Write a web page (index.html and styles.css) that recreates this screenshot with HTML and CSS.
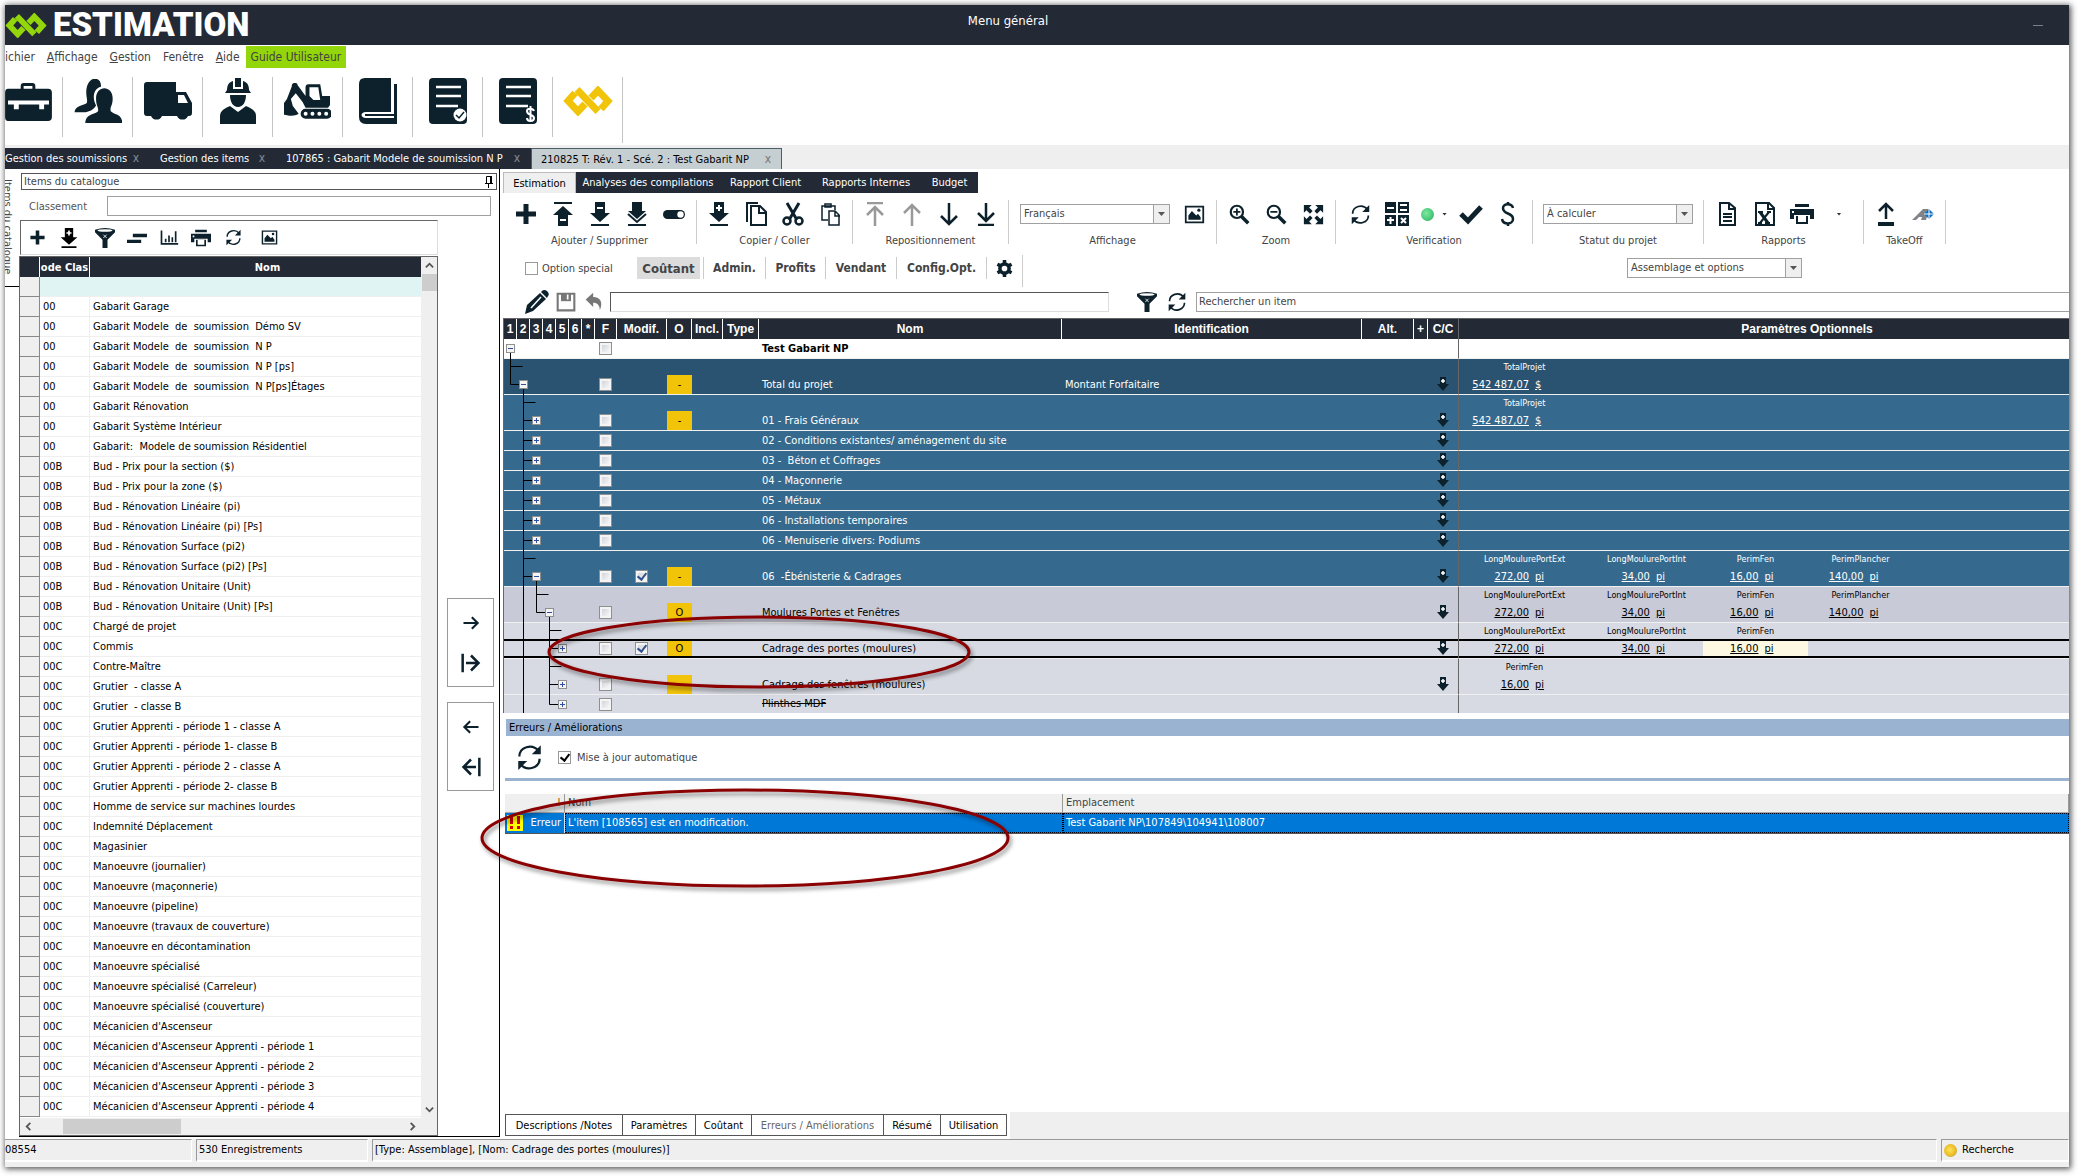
FILE: index.html
```html
<!DOCTYPE html>
<html lang="fr">
<head>
<meta charset="utf-8">
<title>Estimation - Menu général</title>
<link rel="stylesheet" href="styles.css">
</head>
<body>
<svg class="defs" aria-hidden="true">
  <symbol id="logo" viewBox="0 0 50 30"><path fill="none" stroke="currentColor" stroke-width="7" d="M12 7L5 15l10 10.500L22 18M14 3.500L35 25.500M38 23l7-8L35 4.500 28 12"/></symbol>
  <symbol id="case" viewBox="0 0 48 40"><path fill="currentColor" d="M3 7h13V4q0-3 3-3h9q3 0 3 3v3h13q4 0 4 4v25q0 4-4 4H3q-3 0-3-4V11q0-4 3-4zm16 0h9V4h-9z"/><path fill="#fff" d="M3 19h42v4h-5v5h-5v-5H14v5H9v-5H3z"/></symbol>
  <symbol id="people" viewBox="0 0 48 46"><path fill="currentColor" d="M12 14C12-4 28-4 27 8c-8 2-9 12-5 19-3 5-7 6-11 7H0c1-6 5-6 12-9 2-2 0-6 0-11z"/><path fill="currentColor" d="M22 20c0-14 17-14 17 0 0 8-3 8-2 13 4 4 11 2 12 12H11c1-10 9-8 13-12 1-4-2-5-2-13z"/></symbol>
  <symbol id="truck" viewBox="0 0 48 40"><path fill="currentColor" d="M3 1h29v10h10l6 11v10q0 3-3 3h-1a6 6 0 0 1-11 0H18a6 6 0 0 1-11 0H3q-3 0-3-3V4q0-3 3-3z"/><path fill="#fff" d="M34 14h6l4 8H34z"/></symbol>
  <symbol id="worker" viewBox="0 0 36 46"><path fill="currentColor" d="M15 0h6v9h-6zM7 12c0-5 2-8 6-9v8h10V3c4 1 6 4 6 9l2 3H5zM10 17h16c0 7-3 12-8 12s-8-5-8-12zM0 46v-8c0-6 6-8 10-10l8 6 8-6c4 2 10 4 10 10v8z"/></symbol>
  <symbol id="digger" viewBox="0 0 48 36"><path fill="currentColor" fill-rule="evenodd" d="M8 3a3 3 0 0 1 6-1l8 11V4q0-3 3-3h12l2 12h8v9l-2 3H22l-3-6-7-9-5 6 2 7 6 8c-5 3-9 2-15 1V20l3-4zM26 4v9l4 4h7L35 4zM22 26h22a5 5 0 0 1 0 10H22a5 5 0 0 1 0-10zm0 3a2 2 0 1 0 .1 4 2 2 0 0 0 0-4zm7 0a2 2 0 1 0 .1 4 2 2 0 0 0 0-4zm7 0a2 2 0 1 0 .1 4 2 2 0 0 0 0-4zm7 0a2 2 0 1 0 .1 4 2 2 0 0 0 0-4z"/></symbol>
  <symbol id="book" viewBox="0 0 38 46"><path fill="currentColor" d="M6 0h26v34H7c-6 0-6 6 0 6h28V6h3v40H7q-7 0-7-7V6q0-6 6-6zM6 36h29v2H6z"/></symbol>
  <symbol id="doc" viewBox="0 0 38 46"><rect width="38" height="46" rx="4" fill="currentColor"/><path stroke="#fff" stroke-width="2.500" d="M7 9h25M7 18h25M7 28h22"/></symbol>
  <symbol id="plus" viewBox="0 0 24 24"><path stroke="currentColor" stroke-width="5" d="M2 12h20M12 2v20"/></symbol>
  <symbol id="down" viewBox="0 0 24 24"><path fill="currentColor" d="M7 0h10v11h5L12 20 2 11h5zM3 22h18v2H3z"/><path stroke="#fff" stroke-width="2" d="M9 6h6"/></symbol>
  <symbol id="downplus" viewBox="0 0 24 24"><path fill="currentColor" d="M7 0h10v11h5L12 20 2 11h5zM3 22h18v2H3z"/><path stroke="#fff" stroke-width="2" d="M9 6h6M12 3v6"/></symbol>
  <symbol id="arrowplus" viewBox="0 0 12 14"><path fill="#0c212b" d="M3 0h6v7h3l-6 7-6-7h3z"/><path stroke="#fff" stroke-width="1.500" d="M4 4h4M6 2v4"/></symbol>
  <symbol id="downdouble" viewBox="0 0 24 24"><path fill="currentColor" d="M7 0h10v9h4L12 17 3 9h4zM3 22h18v2H3z"/><path fill="none" stroke="currentColor" stroke-width="2" d="M3 12l9 8 9-8"/></symbol>
  <symbol id="up" viewBox="0 0 24 24"><path fill="currentColor" d="M3 0h18v2H3zM12 4l10 9h-5v11H7V13H2z"/><path stroke="#fff" stroke-width="2" d="M9 18h6"/></symbol>
  <symbol id="toggle" viewBox="0 0 24 24"><rect x="1" y="8" width="22" height="9" rx="4.500" fill="currentColor"/><circle cx="18.500" cy="12.500" r="3.200" fill="#fff"/></symbol>
  <symbol id="copy" viewBox="0 0 24 24"><path fill="none" stroke="currentColor" stroke-width="2" d="M7 4h9l6 6v13H7zM15 4v7h7M3 20V1h11"/></symbol>
  <symbol id="cut" viewBox="0 0 24 24"><path fill="none" stroke="currentColor" stroke-width="3" d="M6 1l10 17M18 1L8 18"/><g fill="none" stroke="currentColor" stroke-width="2.500"><circle cx="6" cy="19" r="3.500"/><circle cx="18" cy="19" r="3.500"/></g></symbol>
  <symbol id="paste" viewBox="0 0 24 24"><path fill="none" stroke="currentColor" stroke-width="1.500" d="M10 18H4V4h13v4M7 5V2h6v3zM11 9h6l4 4v10H11zM17 9v5h5"/></symbol>
  <symbol id="totop" viewBox="0 0 24 24"><path fill="none" stroke="currentColor" stroke-width="2.500" d="M4 1h16M12 24V5M4 13l8-8 8 8"/></symbol>
  <symbol id="goup" viewBox="0 0 24 24"><path fill="none" stroke="currentColor" stroke-width="2.500" d="M12 24V3M4 11l8-8 8 8"/></symbol>
  <symbol id="godown" viewBox="0 0 24 24"><path fill="none" stroke="currentColor" stroke-width="2.500" d="M12 1v21M4 14l8 8 8-8"/></symbol>
  <symbol id="tobottom" viewBox="0 0 24 24"><path fill="none" stroke="currentColor" stroke-width="2.500" d="M4 23h16M12 1v18M4 11l8 8 8-8"/></symbol>
  <symbol id="image" viewBox="0 0 24 24"><path fill="none" stroke="currentColor" stroke-width="2" d="M2 3h20v18H2z"/><path fill="currentColor" d="M5 18v-5l4-5 5 5 2-2 3 4v3z"/><circle cx="17" cy="7" r="1.800" fill="currentColor"/></symbol>
  <symbol id="zoomin" viewBox="0 0 24 24"><g fill="none" stroke="currentColor"><circle cx="9" cy="9" r="7" stroke-width="2.500"/><path stroke-width="4" d="M14 14l8 8"/><path stroke-width="2" d="M5 9h8M9 5v8"/></g></symbol>
  <symbol id="zoomout" viewBox="0 0 24 24"><g fill="none" stroke="currentColor"><circle cx="9" cy="9" r="7" stroke-width="2.500"/><path stroke-width="4" d="M14 14l8 8"/><path stroke-width="2" d="M5 9h8"/></g></symbol>
  <symbol id="expand" viewBox="0 0 24 24"><path fill="currentColor" d="M1 1h9L7 4l4 4-3 3-4-4-3 3zM23 1v9l-3-3-4 4-3-3 4-4-3-3zM1 23v-9l3 3 4-4 3 3-4 4 3 3zM23 23h-9l3-3-4-4 3-3 4 4 3-3z"/></symbol>
  <symbol id="refresh" viewBox="0 0 24 24"><path fill="none" stroke="currentColor" stroke-width="2" d="M3 11C3 3 14-1 20 6M21 13c0 8-11 12-17 5"/><path fill="currentColor" d="M22 1v8h-8zM2 23v-8h8z"/></symbol>
  <symbol id="calc" viewBox="0 0 24 24"><path fill="currentColor" d="M0 0h11v11H0zM13 0h11v11H13zM0 13h11v11H0zM13 13h11v11H13z"/><path stroke="#fff" stroke-width="2" d="M2 6h7M15 3h7M15 8h7M2 18h7M5.500 15v7M16 16l5 5M21 16l-5 5"/></symbol>
  <symbol id="check" viewBox="0 0 24 24"><path fill="none" stroke="currentColor" stroke-width="5" d="M2 12l7 7L22 5"/></symbol>
  <symbol id="dollar" viewBox="0 0 24 24"><path fill="none" stroke="currentColor" stroke-width="2.500" d="M17 6c-1-5-10-5-10 0 0 7 10 4 10 11 0 6-10 6-11 0M12 0v3M12 21v3"/></symbol>
  <symbol id="page" viewBox="0 0 24 24"><path fill="none" stroke="currentColor" stroke-width="2" d="M4 1h9l6 5v17H4zM13 1v6h6M7 12h9M7 15h9M7 19h9"/></symbol>
  <symbol id="excel" viewBox="0 0 24 24"><path fill="none" stroke="currentColor" stroke-width="2" d="M3 1h13l5 5v17H3zM15 1v6h6"/><path stroke="currentColor" stroke-width="3" d="M7 10l8 11"/><path stroke="currentColor" stroke-width="2" d="M16 10L7 21M5 10h5M14 10h4M5 21h4M12 21h5"/></symbol>
  <symbol id="print" viewBox="0 0 24 24"><path fill="currentColor" d="M5 2h14v3H5zM0 7h24v10h-4v-4H4v4H0zM6 14h12v8H6z"/><path fill="#fff" d="M8 14h8v6H8zM2 9h2v2H2z"/></symbol>
  <symbol id="upload" viewBox="0 0 24 24"><path fill="none" stroke="currentColor" stroke-width="2.500" d="M12 17V2M5 9l7-7 7 7"/><path stroke="currentColor" stroke-width="4" d="M4 22h16"/></symbol>
  <symbol id="takeoff" viewBox="0 0 24 24"><path fill="#808489" d="M1 18L12 7h6l-3 11h-5l1-3H8l-3 3z"/><path fill="#0a6fc2" d="M18 7l5 5-5 5-5-5z"/><path stroke="#fff" d="M13 12h11M18 6v11"/></symbol>
  <symbol id="funnel" viewBox="0 0 24 24"><path fill="currentColor" d="M0 2q12-4 24 0v3l-9 9v10H9V14L0 5z"/><ellipse cx="12" cy="3" rx="9" ry="1.500" fill="#fff"/><path stroke="#fff" d="M10 8l4 4M14 8l-4 4"/></symbol>
  <symbol id="lines" viewBox="0 0 24 24"><path stroke="currentColor" stroke-width="4" d="M7 9h17M0 16h17"/></symbol>
  <symbol id="chart" viewBox="0 0 24 24"><path fill="none" stroke="currentColor" stroke-width="2" d="M3 3v16h20M8 17v-4M12 17V9M16 17v-6M20 17V4"/></symbol>
  <symbol id="pencil" viewBox="0 0 24 24"><path fill="currentColor" d="M0 24l2-9L15 3l6 6L8 21zM17 1q2-2 5 0 3 3 1 5l-1 2-6-6z"/><path stroke="#fff" stroke-width="1.500" d="M6 18L16 7"/></symbol>
  <symbol id="save" viewBox="0 0 24 24"><path fill="none" stroke="currentColor" stroke-width="2.500" d="M2 2h20v20H2z"/><path fill="currentColor" d="M6 2h12v9H6z"/><path fill="#fff" d="M13 3h2v6h-2z"/></symbol>
  <symbol id="undo" viewBox="0 0 24 24"><path fill="currentColor" d="M2 9l9-8v5c9 0 12 7 8 16 0-6-3-9-8-9v5z"/></symbol>
  <symbol id="gear" viewBox="0 0 24 24"><circle cx="12" cy="12" r="6.500" fill="none" stroke="currentColor" stroke-width="5"/><path stroke="currentColor" stroke-width="5" d="M12 0v5M12 19v5M2 6l4 2M18 16l4 2M2 18l4-2M18 8l4-2"/></symbol>
  <symbol id="right" viewBox="0 0 24 24"><path fill="none" stroke="currentColor" stroke-width="2.500" d="M3 12h17M13 5l7 7-7 7"/></symbol>
  <symbol id="rightbar" viewBox="0 0 24 24"><path fill="none" stroke="currentColor" stroke-width="3" d="M2 1v22M6 12h15M12 3l9 9-9 9"/></symbol>
  <symbol id="pin" viewBox="0 0 10 12"><path fill="none" stroke="#000" d="M2.500 7V.5h4V7M1 7.500h8M4.500 8v4"/><path fill="#000" d="M6 0h2v8H6z"/></symbol>
  <symbol id="chev" viewBox="0 0 10 10"><path fill="none" stroke="#555" stroke-width="2" d="M1 7l4-4 4 4"/></symbol>
  <symbol id="minusbox" viewBox="0 0 9 9"><rect x=".5" y=".5" width="8" height="8" fill="#f4f4f4" stroke="#8f8f8f"/><path stroke="#2f4f9e" d="M2 4.500h5"/></symbol>
  <symbol id="plusbox" viewBox="0 0 9 9"><rect x=".5" y=".5" width="8" height="8" fill="#f4f4f4" stroke="#8f8f8f"/><path stroke="#2f4f9e" d="M2 4.500h5M4.500 2v5"/></symbol>
  <symbol id="t-l3" viewBox="0 0 91 20"><path fill="none" stroke="#000" d="M19.500 0v20M19.500 9.500h10"/><use href="#plusbox" x="28" y="5" width="9" height="9"/></symbol>
  <symbol id="t-l5" viewBox="0 0 91 36"><path fill="none" stroke="#000" d="M19.500 0v36M45.500 0v36M45.500 7.500h12M45.500 25.500h10"/><use href="#plusbox" x="54" y="21" width="9" height="9"/></symbol>
</svg>

<div class="window">
  <header class="titlebar">
    <svg class="brand-mark"><use href="#logo"/></svg>
    <span class="brand">ESTIMATION</span>
    <h1 class="title">Menu général</h1>
    <button class="minimize" aria-label="Réduire"></button>
  </header>
  <nav class="menu">
    <a href="#">ichier</a><a href="#"><u>A</u>ffichage</a><a href="#"><u>G</u>estion</a><a href="#">Fenêtre</a><a href="#"><u>A</u>ide</a><a href="#" class="guide">Guide Utilisateur</a>
  </nav>
  <div class="mainbar">
    <button class="first" aria-label="Soumissions"><svg width="47" height="39"><use href="#case"/></svg></button>
    <button aria-label="Clients"><svg width="48" height="45"><use href="#people"/></svg></button>
    <button aria-label="Fournisseurs"><svg width="48" height="40"><use href="#truck"/></svg></button>
    <button aria-label="Main-d'oeuvre"><svg width="36" height="46"><use href="#worker"/></svg></button>
    <button aria-label="Équipement"><svg width="47" height="36"><use href="#digger"/></svg></button>
    <button aria-label="Catalogue"><svg width="38" height="46"><use href="#book"/></svg></button>
    <button aria-label="Formulaires"><svg width="38" height="46" viewBox="0 0 38 46"><use href="#doc"/><circle cx="31" cy="37" r="6.500" fill="#fff"/><path d="M27 37l3 3 5-6" fill="none" stroke="#0c212b" stroke-width="1.500"/></svg></button>
    <button aria-label="Coûts"><svg width="38" height="46" viewBox="0 0 38 46"><use href="#doc"/><path d="M35 33c-1-3-7-3-7 0 0 5 7 3 7 7 0 4-7 4-7 0M31.500 28v16" fill="none" stroke="#fff" stroke-width="2"/></svg></button>
    <button class="gold" aria-label="Accueil"><svg width="50" height="30"><use href="#logo"/></svg></button>
  </div>
  <div class="doctabs">
    <div class="doctab"><span>Gestion des soumissions</span><button aria-label="Fermer">x</button></div>
    <div class="doctab"><span>Gestion des items</span><button aria-label="Fermer">x</button></div>
    <div class="doctab"><span>107865 : Gabarit Modele de soumission N P</span><button aria-label="Fermer">x</button></div>
    <div class="doctab current"><span>210825 T: Rév. 1 - Scé. 2 : Test Gabarit NP</span><button aria-label="Fermer">x</button></div>
  </div>

  <main class="workspace">
    <div class="sidetab"><span>Items du catalogue</span></div>
    <section class="catalogue">
      <h2 class="panel-title">Items du catalogue <svg width="10" height="12"><use href="#pin"/></svg></h2>
      <div class="classement"><label for="classement">Classement</label><input id="classement" type="text"></div>
      <div class="cat-columns">
        <div class="cat-main">
          <div class="cat-tools">
            <button aria-label="Ajouter"><svg><use href="#plus"/></svg></button>
            <button aria-label="Insérer"><svg><use href="#downplus"/></svg></button>
            <button aria-label="Filtrer"><svg><use href="#funnel"/></svg></button>
            <button aria-label="Regrouper"><svg><use href="#lines"/></svg></button>
            <button aria-label="Statistiques"><svg><use href="#chart"/></svg></button>
            <button aria-label="Imprimer"><svg><use href="#print"/></svg></button>
            <button aria-label="Actualiser"><svg><use href="#refresh"/></svg></button>
            <button aria-label="Image"><svg><use href="#image"/></svg></button>
          </div>
          <div class="cat-grid">
            <div class="cat-scroll">
              <table class="cat-table">
                <colgroup><col class="c-gutter"><col class="c-code"><col></colgroup>
                <thead><tr><th></th><th>ode Clas</th><th>Nom</th></tr></thead>
                <tbody>
                  <tr class="filter"><th></th><td></td><td></td></tr>
                  <tr><th></th><td>00</td><td>Gabarit Garage</td></tr>
                  <tr><th></th><td>00</td><td>Gabarit Modele&nbsp; de&nbsp; soumission&nbsp; Démo SV</td></tr>
                  <tr><th></th><td>00</td><td>Gabarit Modele&nbsp; de&nbsp; soumission&nbsp; N P</td></tr>
                  <tr><th></th><td>00</td><td>Gabarit Modele&nbsp; de&nbsp; soumission&nbsp; N P [ps]</td></tr>
                  <tr><th></th><td>00</td><td>Gabarit Modele&nbsp; de&nbsp; soumission&nbsp; N P[ps]Étages</td></tr>
                  <tr><th></th><td>00</td><td>Gabarit Rénovation</td></tr>
                  <tr><th></th><td>00</td><td>Gabarit Système Intérieur</td></tr>
                  <tr><th></th><td>00</td><td>Gabarit:&nbsp; Modele de soumission Résidentiel</td></tr>
                  <tr><th></th><td>00B</td><td>Bud - Prix pour la section ($)</td></tr>
                  <tr><th></th><td>00B</td><td>Bud - Prix pour la zone ($)</td></tr>
                  <tr><th></th><td>00B</td><td>Bud - Rénovation Linéaire (pi)</td></tr>
                  <tr><th></th><td>00B</td><td>Bud - Rénovation Linéaire (pi) [Ps]</td></tr>
                  <tr><th></th><td>00B</td><td>Bud - Rénovation Surface (pi2)</td></tr>
                  <tr><th></th><td>00B</td><td>Bud - Rénovation Surface (pi2) [Ps]</td></tr>
                  <tr><th></th><td>00B</td><td>Bud - Rénovation Unitaire (Unit)</td></tr>
                  <tr><th></th><td>00B</td><td>Bud - Rénovation Unitaire (Unit) [Ps]</td></tr>
                  <tr><th></th><td>00C</td><td>Chargé de projet</td></tr>
                  <tr><th></th><td>00C</td><td>Commis</td></tr>
                  <tr><th></th><td>00C</td><td>Contre-Maître</td></tr>
                  <tr><th></th><td>00C</td><td>Grutier&nbsp; - classe A</td></tr>
                  <tr><th></th><td>00C</td><td>Grutier&nbsp; - classe B</td></tr>
                  <tr><th></th><td>00C</td><td>Grutier Apprenti - période 1 - classe A</td></tr>
                  <tr><th></th><td>00C</td><td>Grutier Apprenti - période 1- classe B</td></tr>
                  <tr><th></th><td>00C</td><td>Grutier Apprenti - période 2 - classe A</td></tr>
                  <tr><th></th><td>00C</td><td>Grutier Apprenti - période 2- classe B</td></tr>
                  <tr><th></th><td>00C</td><td>Homme de service sur machines lourdes</td></tr>
                  <tr><th></th><td>00C</td><td>Indemnité Déplacement</td></tr>
                  <tr><th></th><td>00C</td><td>Magasinier</td></tr>
                  <tr><th></th><td>00C</td><td>Manoeuvre (journalier)</td></tr>
                  <tr><th></th><td>00C</td><td>Manoeuvre (maçonnerie)</td></tr>
                  <tr><th></th><td>00C</td><td>Manoeuvre (pipeline)</td></tr>
                  <tr><th></th><td>00C</td><td>Manoeuvre (travaux de couverture)</td></tr>
                  <tr><th></th><td>00C</td><td>Manoeuvre en décontamination</td></tr>
                  <tr><th></th><td>00C</td><td>Manoeuvre spécialisé</td></tr>
                  <tr><th></th><td>00C</td><td>Manoeuvre spécialisé (Carreleur)</td></tr>
                  <tr><th></th><td>00C</td><td>Manoeuvre spécialisé (couverture)</td></tr>
                  <tr><th></th><td>00C</td><td>Mécanicien d'Ascenseur</td></tr>
                  <tr><th></th><td>00C</td><td>Mécanicien d'Ascenseur Apprenti - période 1</td></tr>
                  <tr><th></th><td>00C</td><td>Mécanicien d'Ascenseur Apprenti - période 2</td></tr>
                  <tr><th></th><td>00C</td><td>Mécanicien d'Ascenseur Apprenti - période 3</td></tr>
                  <tr><th></th><td>00C</td><td>Mécanicien d'Ascenseur Apprenti - période 4</td></tr>
                </tbody>
              </table>
              <div class="vbar"><svg><use href="#chev"/></svg><i></i><svg class="flip"><use href="#chev"/></svg></div>
            </div>
            <div class="hbar"><svg class="ccw"><use href="#chev"/></svg><i></i><svg class="cw"><use href="#chev"/></svg></div>
          </div>
        </div>
        <div class="transfer">
          <div class="transfer-box">
            <button aria-label="Ajouter l'item"><svg><use href="#right"/></svg></button>
            <button aria-label="Ajouter à la fin"><svg><use href="#rightbar"/></svg></button>
          </div>
          <div class="transfer-box">
            <button aria-label="Retirer l'item"><svg class="mirror"><use href="#right"/></svg></button>
            <button aria-label="Tout retirer"><svg class="mirror"><use href="#rightbar"/></svg></button>
          </div>
        </div>
      </div>
    </section>

    <section class="project">
      <nav class="tabs"><button class="on">Estimation</button><button>Analyses des compilations</button><button>Rapport Client</button><button>Rapports Internes</button><button>Budget</button></nav>
      <div class="ribbon">
        <div class="group"><div class="tools">
          <button aria-label="Ajouter"><svg><use href="#plus"/></svg></button><button aria-label="Ajouter avant"><svg><use href="#up"/></svg></button><button aria-label="Supprimer"><svg><use href="#down"/></svg></button><button aria-label="Supprimer tout"><svg><use href="#downdouble"/></svg></button><button aria-label="Activer"><svg><use href="#toggle"/></svg></button>
        </div><span>Ajouter / Supprimer</span></div>
        <div class="group"><div class="tools">
          <button aria-label="Dupliquer"><svg><use href="#downplus"/></svg></button><button aria-label="Copier"><svg><use href="#copy"/></svg></button><button aria-label="Couper"><svg><use href="#cut"/></svg></button><button aria-label="Coller"><svg><use href="#paste"/></svg></button>
        </div><span>Copier / Coller</span></div>
        <div class="group"><div class="tools">
          <button class="off" aria-label="Tout en haut"><svg><use href="#totop"/></svg></button><button class="off" aria-label="Monter"><svg><use href="#goup"/></svg></button><button aria-label="Descendre"><svg><use href="#godown"/></svg></button><button aria-label="Tout en bas"><svg><use href="#tobottom"/></svg></button>
        </div><span>Repositionnement</span></div>
        <div class="group"><div class="tools">
          <div class="combo"><select aria-label="Langue"><option>Français</option></select></div><button aria-label="Images"><svg><use href="#image"/></svg></button>
        </div><span>Affichage</span></div>
        <div class="group"><div class="tools">
          <button aria-label="Agrandir"><svg><use href="#zoomin"/></svg></button><button aria-label="Réduire"><svg><use href="#zoomout"/></svg></button><button aria-label="Ajuster"><svg><use href="#expand"/></svg></button>
        </div><span>Zoom</span></div>
        <div class="group"><div class="tools">
          <button aria-label="Actualiser"><svg><use href="#refresh"/></svg></button><button aria-label="Calculer"><svg><use href="#calc"/></svg></button><button class="state" aria-label="État"><i class="led green"></i><i class="caret"></i></button><button aria-label="Vérifier"><svg><use href="#check"/></svg></button><button aria-label="Prix"><svg><use href="#dollar"/></svg></button>
        </div><span>Verification</span></div>
        <div class="group"><div class="tools">
          <div class="combo"><select aria-label="Statut"><option>À calculer</option></select></div>
        </div><span>Statut du projet</span></div>
        <div class="group"><div class="tools">
          <button aria-label="Rapport"><svg><use href="#page"/></svg></button><button aria-label="Excel"><svg><use href="#excel"/></svg></button><button aria-label="Imprimer"><svg><use href="#print"/></svg></button><button aria-label="Options"><i class="caret"></i></button>
        </div><span>Rapports</span></div>
        <div class="group"><div class="tools">
          <button aria-label="Exporter"><svg><use href="#upload"/></svg></button><button aria-label="TakeOff"><svg><use href="#takeoff"/></svg></button>
        </div><span>TakeOff</span></div>
      </div>

      <div class="modes">
        <label class="opt"><input type="checkbox" class="flat"> Option special</label>
        <div class="mode-list">
          <button class="on">Coûtant</button><button>Admin.</button><button>Profits</button><button>Vendant</button><button>Config.Opt.</button><button class="cog" aria-label="Réglages"><svg><use href="#gear"/></svg></button>
        </div>
        <div class="combo wide"><select aria-label="Contenu"><option>Assemblage et options</option></select></div>
      </div>

      <div class="editbar">
        <button aria-label="Modifier"><svg class="big"><use href="#pencil"/></svg></button>
        <button class="grey" aria-label="Enregistrer"><svg><use href="#save"/></svg></button>
        <button class="grey" aria-label="Annuler"><svg><use href="#undo"/></svg></button>
        <input type="text" class="formula" aria-label="Formule">
        <button class="push" aria-label="Filtrer"><svg><use href="#funnel"/></svg></button>
        <button aria-label="Actualiser"><svg><use href="#refresh"/></svg></button>
        <input type="text" class="search" aria-label="Rechercher" value="Rechercher un item">
      </div>

      <table class="grid">
        <colgroup>
          <col span="7" class="g-lvl"><col class="g-f"><col class="g-mod"><col class="g-o"><col class="g-incl"><col class="g-type"><col class="g-nom"><col class="g-id"><col class="g-alt"><col class="g-plus"><col class="g-cc"><col>
        </colgroup>
        <thead><tr><th>1</th><th>2</th><th>3</th><th>4</th><th>5</th><th>6</th><th>*</th><th>F</th><th>Modif.</th><th>O</th><th>Incl.</th><th>Type</th><th>Nom</th><th>Identification</th><th>Alt.</th><th>+</th><th>C/C</th><th>Paramètres Optionnels</th></tr></thead>
        <tbody>
          <tr class="root"><td colspan="7"><svg class="tree"><path d="M6.500 14v6"/><use href="#minusbox" x="2" y="5" width="9" height="9"/></svg></td><td><input type="checkbox" aria-label="F"></td><td></td><td></td><td></td><td></td><td class="name">Test Gabarit NP</td><td></td><td></td><td></td><td></td><td></td></tr>
          <tr class="tall total"><td colspan="7"><svg class="tree"><path d="M6.500 0v25.500h10M6.500 7.500h12M19.500 30v6"/><use href="#minusbox" x="15" y="21" width="9" height="9"/></svg></td><td><input type="checkbox" aria-label="F"></td><td></td><td><b class="tag">-</b></td><td></td><td></td><td class="name">Total du projet</td><td class="name">Montant Forfaitaire</td><td></td><td></td><td><svg class="cc"><use href="#arrowplus"/></svg></td>
            <td><div class="params"><div><small>TotalProjet</small><p><u>542 487,07</u><u>$</u></p></div></div></td></tr>
          <tr class="tall"><td colspan="7"><svg class="tree"><path d="M19.500 0v36M19.500 7.500h12M19.500 25.500h10"/><use href="#plusbox" x="28" y="21" width="9" height="9"/></svg></td><td><input type="checkbox" aria-label="F"></td><td></td><td><b class="tag">-</b></td><td></td><td></td><td class="name">01 - Frais Généraux</td><td></td><td></td><td></td><td><svg class="cc"><use href="#arrowplus"/></svg></td>
            <td><div class="params"><div><small>TotalProjet</small><p><u>542 487,07</u><u>$</u></p></div></div></td></tr>
          <tr><td colspan="7"><svg class="tree"><use href="#t-l3"/></svg></td><td><input type="checkbox" aria-label="F"></td><td></td><td></td><td></td><td></td><td class="name">02 - Conditions existantes/ aménagement du site</td><td></td><td></td><td></td><td><svg class="cc"><use href="#arrowplus"/></svg></td><td></td></tr>
          <tr><td colspan="7"><svg class="tree"><use href="#t-l3"/></svg></td><td><input type="checkbox" aria-label="F"></td><td></td><td></td><td></td><td></td><td class="name">03 -&nbsp; Béton et Coffrages</td><td></td><td></td><td></td><td><svg class="cc"><use href="#arrowplus"/></svg></td><td></td></tr>
          <tr><td colspan="7"><svg class="tree"><use href="#t-l3"/></svg></td><td><input type="checkbox" aria-label="F"></td><td></td><td></td><td></td><td></td><td class="name">04 - Maçonnerie</td><td></td><td></td><td></td><td><svg class="cc"><use href="#arrowplus"/></svg></td><td></td></tr>
          <tr><td colspan="7"><svg class="tree"><use href="#t-l3"/></svg></td><td><input type="checkbox" aria-label="F"></td><td></td><td></td><td></td><td></td><td class="name">05 - Métaux</td><td></td><td></td><td></td><td><svg class="cc"><use href="#arrowplus"/></svg></td><td></td></tr>
          <tr><td colspan="7"><svg class="tree"><use href="#t-l3"/></svg></td><td><input type="checkbox" aria-label="F"></td><td></td><td></td><td></td><td></td><td class="name">06 - Installations temporaires</td><td></td><td></td><td></td><td><svg class="cc"><use href="#arrowplus"/></svg></td><td></td></tr>
          <tr><td colspan="7"><svg class="tree"><use href="#t-l3"/></svg></td><td><input type="checkbox" aria-label="F"></td><td></td><td></td><td></td><td></td><td class="name">06 - Menuiserie divers: Podiums</td><td></td><td></td><td></td><td><svg class="cc"><use href="#arrowplus"/></svg></td><td></td></tr>
          <tr class="tall"><td colspan="7"><svg class="tree"><path d="M19.500 0v36M19.500 7.500h12M19.500 25.500h10M32.500 30v6"/><use href="#minusbox" x="28" y="21" width="9" height="9"/></svg></td><td><input type="checkbox" aria-label="F"></td><td><input type="checkbox" checked aria-label="Modif."></td><td><b class="tag">-</b></td><td></td><td></td><td class="name">06&nbsp; -Ébénisterie &amp; Cadrages</td><td></td><td></td><td></td><td><svg class="cc"><use href="#arrowplus"/></svg></td>
            <td><div class="params"><div><small>LongMoulurePortExt</small><p><u>272,00</u><u>pi</u></p></div><div><small>LongMoulurePortInt</small><p><u>34,00</u><u>pi</u></p></div><div><small>PerimFen</small><p><u>16,00</u><u>pi</u></p></div><div><small>PerimPlancher</small><p><u>140,00</u><u>pi</u></p></div></div></td></tr>
          <tr class="tall lilac"><td colspan="7"><svg class="tree"><path d="M19.500 0v36M32.500 0v25.500h10M32.500 7.500h12M45.500 30v6"/><use href="#minusbox" x="41" y="21" width="9" height="9"/></svg></td><td><input type="checkbox" aria-label="F"></td><td></td><td><b class="tag">O</b></td><td></td><td></td><td class="name">Moulures Portes et Fenêtres</td><td></td><td></td><td></td><td><svg class="cc"><use href="#arrowplus"/></svg></td>
            <td><div class="params"><div><small>LongMoulurePortExt</small><p><u>272,00</u><u>pi</u></p></div><div><small>LongMoulurePortInt</small><p><u>34,00</u><u>pi</u></p></div><div><small>PerimFen</small><p><u>16,00</u><u>pi</u></p></div><div><small>PerimPlancher</small><p><u>140,00</u><u>pi</u></p></div></div></td></tr>
          <tr class="tall pale selected"><td colspan="7"><svg class="tree"><use href="#t-l5"/></svg></td><td><input type="checkbox" aria-label="F"></td><td><input type="checkbox" checked aria-label="Modif."></td><td><b class="tag">O</b></td><td></td><td></td><td class="name">Cadrage des portes (moulures)</td><td></td><td></td><td></td><td><svg class="cc"><use href="#arrowplus"/></svg></td>
            <td><div class="params"><div><small>LongMoulurePortExt</small><p><u>272,00</u><u>pi</u></p></div><div><small>LongMoulurePortInt</small><p><u>34,00</u><u>pi</u></p></div><div><small>PerimFen</small><p class="edit"><u>16,00</u><u>pi</u></p></div></div></td></tr>
          <tr class="tall pale"><td colspan="7"><svg class="tree"><use href="#t-l5"/></svg></td><td><input type="checkbox" aria-label="F"></td><td></td><td><b class="tag">-</b></td><td></td><td></td><td class="name">Cadrage des fenêtres (moulures)</td><td></td><td></td><td></td><td><svg class="cc"><use href="#arrowplus"/></svg></td>
            <td><div class="params"><div><small>PerimFen</small><p><u>16,00</u><u>pi</u></p></div></div></td></tr>
          <tr class="pale last"><td colspan="7"><svg class="tree"><path d="M19.500 0v18M45.500 0v9.500h10"/><use href="#plusbox" x="54" y="5" width="9" height="9"/></svg></td><td><input type="checkbox" aria-label="F"></td><td></td><td></td><td></td><td></td><td class="name"><s>Plinthes MDF</s></td><td></td><td></td><td></td><td></td><td></td></tr>
        </tbody>
      </table>

      <div class="errors">
        <h3>Erreurs / Améliorations</h3>
        <div class="err-tools"><button aria-label="Actualiser"><svg><use href="#refresh"/></svg></button><label><input type="checkbox" checked class="sunk"> Mise à jour automatique</label></div>
        <table class="err-table">
          <colgroup><col class="e-kind"><col class="e-name"><col></colgroup>
          <thead><tr><th class="bang">!</th><th>Nom</th><th>Emplacement</th></tr></thead>
          <tbody><tr><td><div class="kind"><svg width="16" height="16" viewBox="0 0 16 16"><path fill="#ff0" d="M0 0h16v16H0z"/><path stroke="#d40000" stroke-width="3" d="M4.500 1v8M11.500 1v8M4.500 11v3M11.500 11v3"/></svg>Erreur</div></td><td class="focus">L'item [108565] est en modification.</td><td class="focus">Test Gabarit NP\107849\104941\108007</td></tr></tbody>
        </table>
      </div>
      <nav class="bottom-tabs"><button>Descriptions /Notes</button><button>Paramètres</button><button>Coûtant</button><button class="on">Erreurs / Améliorations</button><button>Résumé</button><button>Utilisation</button><i></i></nav>
    </section>
  </main>

  <footer class="status">
    <span class="s-id">08554</span><span class="s-count">530 Enregistrements</span><span class="s-info">[Type: Assemblage], [Nom: Cadrage des portes (moulures)]</span><span class="s-find"><i class="led gold-led"></i>Recherche</span>
  </footer>

  <svg class="marks" aria-hidden="true"><ellipse cx="754" cy="647" rx="210" ry="35"/><ellipse cx="740" cy="833" rx="263" ry="48"/></svg>
</div>
</body>
</html>
```

FILE: styles.css
```css
*,*::before,*::after{box-sizing:border-box}
body{margin:0;padding:5px 9px 9px 5px;overflow:hidden;background:#fff;font:11px/19px "DejaVu Sans Condensed","DejaVu Sans",sans-serif;color:#000}
button,input,select{font:inherit;color:inherit;margin:0;padding:0;border:0;background:none;border-radius:0}
h1,h2,h3,p{margin:0;font:inherit}
a{color:inherit;text-decoration:none}
svg{display:block}
.defs{display:none}
.window{position:relative;display:flex;flex-direction:column;min-height:calc(100vh - 14px);overflow:hidden;background:#fff;box-shadow:1px 1px 6px 1px #555}

/* title, menu and main toolbar */
.titlebar{display:flex;align-items:center;height:40px;background:#232a36;color:#fff;flex:none}
.brand-mark{width:42px;height:25px}
.brand-mark{color:#93d60a}
.brand{width:208px;padding-left:6px;font:900 33px/40px Roboto,sans-serif}
.title{flex:1;text-align:center;margin-left:-40px;padding:0 232px 10px 0;font-size:13px}
.minimize{width:10px;height:1px;margin-right:26px;background:#78808c}
.menu{display:flex;height:23px;align-items:center;color:#444;font-size:12px}
.menu a{margin-right:12px;line-height:22px}
.menu a:nth-child(5){margin-right:6px}
.menu .guide{background:#93d60a;padding:0 5px}
.mainbar{display:flex;height:77px;padding-top:9px;align-items:flex-start;color:#0c212b}
.mainbar button{display:flex;align-items:center;justify-content:center;width:70px;height:60px;padding-bottom:12px;border-right:1px solid #c4c4c4}
.mainbar .first{width:58px;justify-content:flex-start}
.mainbar .gold{color:#f1c40a;height:66px;padding-bottom:18px}
.doctabs{display:grid;grid-template-columns:155px 126px 245px 251px 1fr;height:24px;padding-top:3px;background:#efefef;flex:none}
.doctab{display:flex;align-items:center;justify-content:space-between;padding-right:20px;background:#232a36;color:#fff;white-space:nowrap}
.doctab button{width:8px;color:#858b93;font-size:12px}
.doctab:nth-child(3){padding-right:10px}
.doctab.current{background:#c5ced1;color:#000;padding:0 9px;border:1px solid #4d5d66;border-width:1px 1px 0}
.doctab.current button{color:#777}

/* catalogue panel */
.workspace{display:flex;flex:1;min-height:0}
.sidetab{width:14px;height:118px;flex:none;border-bottom:1px solid #000;overflow:hidden;color:#444}
.sidetab span{display:block;margin:10px 0 0 -7px;writing-mode:vertical-rl;white-space:nowrap}
.catalogue{display:flex;flex-direction:column;width:481px;flex:none;margin-bottom:2px;padding-top:4px;border-right:1px solid #000;border-bottom:1px solid #000}
.panel-title{display:flex;justify-content:space-between;align-items:center;margin:0 2px;height:17px;padding:0 2px 0 2px;border:1px solid #555;color:#444;flex:none}
.classement{display:flex;align-items:center;padding:6px 8px 4px 10px;flex:none}
.classement label{width:78px;color:#555}
.classement input{flex:1;height:20px;border:1px solid #a0a0a0}
.cat-columns{display:flex;flex:1;min-height:0}
.cat-main{display:flex;flex-direction:column;width:419px}
.cat-tools{display:flex;align-items:center;height:35px;margin-left:1px;border:1px solid #ddd;border-top-color:#666;border-left-color:#666;color:#0c212b;flex:none}
.cat-tools button{width:32px}
.cat-tools button:nth-child(3),.cat-tools button:nth-child(8){margin-left:4px}
.cat-tools button:nth-child(2){color:#000}
.cat-tools svg{width:20px;height:20px;margin:auto}
.cat-tools button:nth-child(1) svg,.cat-tools button:nth-child(7) svg,.cat-tools button:nth-child(8) svg{width:17px;height:17px}
.cat-grid{display:flex;flex-direction:column;flex:1;margin-top:1px;border:1px solid #666;min-height:0}
.cat-scroll{display:flex;flex:1;min-height:0;overflow:hidden}
.cat-table{flex:1;align-self:flex-start;table-layout:fixed;border-spacing:0;width:401px}
.c-gutter{width:20px}.c-code{width:50px}
.cat-table th,.cat-table td{height:20px;padding:0;white-space:nowrap;overflow:hidden}
.cat-table thead th{background:#232a36;color:#fff;border-right:1px solid #fff}
.cat-table thead th:last-child{border:0;padding-right:0;padding-left:24px}
.cat-table tbody th{background:#efefef;border-right:1px solid #888;border-bottom:1px solid #888}
.cat-table td{padding-left:3px;border-right:1px solid #efefef;border-bottom:1px solid #efefef}
.cat-table td:last-child{border-right:0}
.cat-table .filter td{background:#dff4f3;border-right:0}
.vbar{display:flex;flex-direction:column;align-items:center;width:16px;background:#efefef;padding:4px 0}
.vbar svg,.hbar svg{width:9px;height:9px}
.vbar i{width:15px;height:17px;margin-top:4px;margin-bottom:auto;background:#cdcdcd}
.flip{transform:scaleY(-1)}.mirror{transform:scaleX(-1)}.cw{transform:rotate(90deg)}.ccw{transform:rotate(-90deg)}
.hbar{display:flex;align-items:center;height:17px;padding:0 20px 0 4px;background:#efefef;flex:none}
.hbar i{width:118px;height:15px;margin:0 auto 0 30px;background:#cdcdcd}
.transfer{display:flex;flex-direction:column;gap:15px;padding:378px 0 0 9px}
.transfer-box{display:flex;flex-direction:column;justify-content:center;width:47px;height:89px;border:1px solid #999;color:#0c212b}
.transfer button{display:flex;align-items:center;justify-content:center;height:40px}
.transfer svg{width:20px;height:20px}

/* project panel: tabs and ribbon */
.project{display:flex;flex-direction:column;flex:1;min-width:0;padding:3px 0 0 3px}
.tabs{display:grid;grid-template-columns:73px 144px 91px 110px 57px;height:21px;flex:none}
.tabs button{background:#232a36;color:#fff;white-space:nowrap}
.tabs .on{background:#efefef;color:#000;border:1px solid #bbb;border-bottom:0}
.ribbon{display:grid;grid-template-columns:194px 156px 156px 208px 119px 197px 171px 160px 82px;padding-top:7px;color:#0c212b}
.group{height:44px;border-right:1px solid #ccc}
.group>span{display:block;text-align:center;color:#444;margin-top:3px}
.tools{display:flex;align-items:center;justify-content:center;height:28px}
.tools button{width:37px;display:flex;align-items:center;justify-content:center;height:28px}
.tools svg{width:24px;height:24px}
.group:nth-child(4) svg,.group:nth-child(5) svg,.group:nth-child(6) button:first-child svg{width:21px;height:21px}
.group:nth-child(4) .tools{justify-content:flex-start;gap:6px;padding-left:11px}
.group:nth-child(3) .off{color:#999}
.state{gap:8px}
.led{width:13px;height:13px;border-radius:50%}
.green{background:radial-gradient(circle at 40% 40%,#7ee8a0,#45c878 60%,#4f8a66)}
.gold-led{background:radial-gradient(circle at 45% 45%,#ffe35a,#e8b923 60%,#777)}
.caret{width:5px;height:3px;background:#333;clip-path:polygon(0 0,100% 0,50% 100%)}
.combo{position:relative;width:150px;height:20px;border:1px solid #a0a0a0;color:#444}
.combo select{appearance:none;display:block;width:100%;height:18px;padding-left:3px;line-height:18px}
.combo::before{content:"";position:absolute;right:0;top:0;width:16px;height:18px;border-left:1px solid #a0a0a0;background:#efefef;pointer-events:none}
.combo::after{content:"";position:absolute;right:4px;top:7px;width:7px;height:4px;background:#555;clip-path:polygon(0 0,100% 0,50% 100%);pointer-events:none}
.combo.wide{width:175px;margin:3px 0 0 604px}
.modes{display:flex;height:32px;margin-top:11px;padding-left:22px;flex:none}
.opt{display:flex;align-items:center;gap:4px;width:112px;height:26px;color:#444}
input[type=checkbox]{appearance:none;width:13px;height:13px;border:1px solid #999;background:#fff}
.mode-list{display:grid;grid-template-columns:66px 62px 60px 71px 90px 36px;border-right:1px solid #ccc;color:#444}
.mode-list button{height:22px;margin-top:2px;font-size:12px;font-weight:700}
.mode-list button+button{border-left:1px solid #ccc}
.mode-list .on{background:#dcdcdc;margin-right:3px;font-size:13px}
.mode-list .cog{color:#0c212b}
.cog svg{width:17px;height:17px;margin:auto}
.editbar{display:flex;align-items:center;height:30px;padding:0 0 1px 19px;color:#0c212b;flex:none}
.editbar button{display:flex;align-items:center;justify-content:center;width:30px;flex:none}
.editbar svg{width:20px;height:20px}
.editbar .big{width:24px;height:24px}
.editbar .grey{width:28px;color:#777}
.editbar .formula{width:499px;height:20px;margin-left:2px;border:1px solid #ddd;border-top-color:#555;border-left-color:#555}
.editbar .push{margin-left:23px}
.editbar .search{flex:1;height:20px;margin-left:4px;padding-left:2px;border:1px solid #a0a0a0;border-right:0;color:#444}

/* estimate tree */
.grid{table-layout:fixed;width:100%;border-spacing:0;border-top:1px solid #666;border-left:1px solid #666;margin-top:1px;flex:none}
.g-lvl{width:13px}.g-f{width:22px}.g-mod{width:50px}.g-o{width:25px}.g-incl{width:31px}.g-type{width:36px}.g-nom{width:303px}.g-id{width:300px}.g-alt{width:52px}.g-plus{width:14px}.g-cc{width:31px}
.grid th{height:20px;padding:0;background:#232a36;color:#fff;border-right:1px solid #fff;white-space:nowrap;font:bold 12px/19px "Liberation Sans",Arial,sans-serif}
.grid th:nth-child(17){border-right-color:#666}
.grid th:last-child{border:0;padding-left:86px}
.grid td{position:relative;height:20px;padding:0;vertical-align:bottom;white-space:nowrap;background:#356a8e;color:#fff;border-bottom:1px solid #f0f0f0}
.grid td:nth-child(2),.grid td:nth-child(3){padding-right:2px}
.grid td:nth-child(11){border-right:1px solid #666}
.grid .tall td{height:36px}
.grid .last td{height:18px;border-bottom:0;line-height:18px}
.grid .root td{background:#fff;color:#000;font-weight:700}
.grid .total td{background:#295370}
.grid .lilac td{background:#c9cad7;color:#000}
.grid .pale td{background:#d8dae3;color:#000}
.grid td.name{padding-left:3px}
.tree{width:91px;height:20px;margin-bottom:-1px;fill:none;stroke:#000}
.tall .tree{height:36px}
.last .tree{height:18px;margin:0}
.grid input{display:block;margin:0 auto 3px;border:1px solid #8f8f8f;background:linear-gradient(135deg,#c9ccd2,#fff);box-shadow:inset 0 0 0 2px #f4f4f4}
.grid input:checked::after,.sunk:checked::after{content:"";display:block;width:6px;height:9px;margin:0 0 0 3px;border:solid #33508f;border-width:0 2px 2px 0;transform:rotate(38deg)}
.grid .last input{margin-bottom:2px}
.tag{display:block;height:19px;background:#f1c40a;color:#000;text-align:center;font-weight:400}
.cc{width:12px;height:14px;margin:0 auto 3px}
.params{display:grid;grid-template-columns:131px 113px 105px 105px;height:35px}
.params small{display:block;height:16px;text-align:center;font:9px/17px "DejaVu Sans Condensed","DejaVu Sans",sans-serif}
.params p{display:grid;grid-template-columns:56fr 44fr;gap:6px;height:19px}
.params u:first-child{text-align:right}
.selected td::after{content:"";position:absolute;left:0;right:0;top:16px;height:19px;border:solid #000;border-width:2px 0;pointer-events:none}
.selected .edit{background:#fdf8e1}

/* errors */
.errors{flex:1;padding:6px 0 0 2px}
.errors h3{height:17px;margin-left:1px;padding-left:3px;line-height:17px;background:#9ab3d1}
.err-tools{display:flex;align-items:center;gap:15px;height:45px;padding-left:11px;border-bottom:3px solid #9ab3d1;color:#0c212b}
.err-tools svg{width:27px;height:27px}
.err-tools label{display:flex;align-items:center;gap:6px;color:#444}
.sunk:checked::after{border-color:#000}
.err-table{width:100%;margin-top:13px;table-layout:fixed;border-spacing:0;border-bottom:1px solid #555;line-height:18px}
.e-kind{width:60px}.e-name{width:498px}
.err-table th{height:19px;padding:0 3px;text-align:left;font-weight:400;background:#efefef;color:#444;border-right:1px solid #999;border-bottom:1px solid #aaa}
.err-table .bang{text-align:right;color:#a06000}
.err-table td{height:20px;padding:0 3px 0 2px;background:#0078d7;color:#fff;border-right:1px solid #d8e8f8}
.err-table .focus{border:1px dotted #001;padding-left:2px}
.kind{display:flex;align-items:center;justify-content:space-between}
.bottom-tabs{display:grid;grid-template-columns:117px 73px 56px 132px 57px 66px 1fr;padding:0 0 3px 2px;flex:none}
.bottom-tabs button{height:22px;border:1px solid #555;margin-right:-1px;white-space:nowrap}
.bottom-tabs .on{color:#666}
.bottom-tabs i{margin:-2px 0 -3px 4px;background:#efefef}

.status{display:flex;gap:4px;height:28px;padding-bottom:5px;background:#efefef;flex:none}
.status span{border:1px solid #fff;border-top-color:#999;border-left-color:#999;border-bottom-width:2px;padding-left:2px;line-height:20px}
.status .s-id{width:187px;padding:0;border-left:0}
.s-count{width:172px}
.s-info{flex:1}
.status .s-find{display:flex;align-items:center;gap:5px;width:128px}
.marks{position:absolute;left:0;top:0;width:1100px;height:900px;fill:none;stroke:#8b0000;stroke-width:3;filter:drop-shadow(2px 3px 2px rgba(0,0,0,.45));pointer-events:none}
```
